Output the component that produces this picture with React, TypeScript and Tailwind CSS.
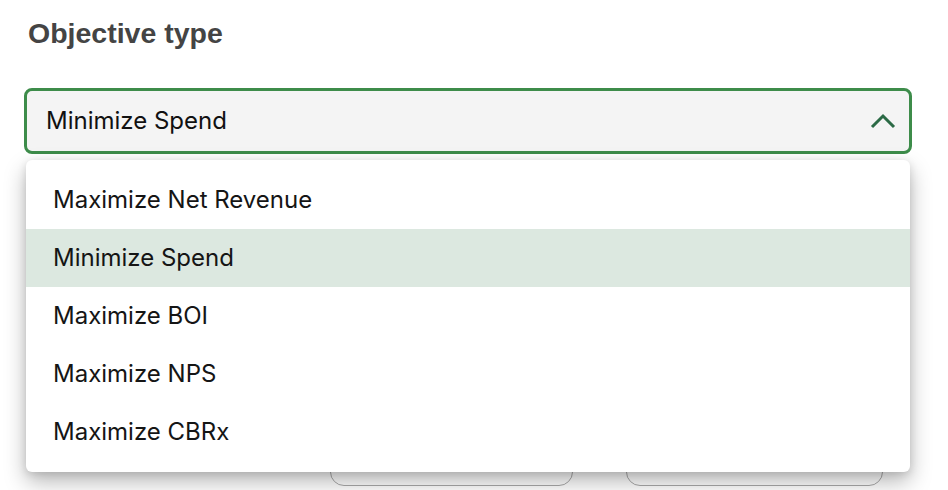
import React from "react";

const items = [
  "Maximize Net Revenue",
  "Minimize Spend",
  "Maximize BOI",
  "Maximize NPS",
  "Maximize CBRx",
];

export default function App() {
  return (
    <div className="relative w-[948px] h-[490px] bg-white overflow-hidden" style={{ fontFamily: "Inter, 'Noto Sans', sans-serif" }}>
      <div className="pl-[28px] pt-[15px]">
        <h2
          className="text-[28.5px] font-bold text-[#444444] leading-[36px]"
          style={{ fontFamily: "'Liberation Sans', Arial, sans-serif" }}
        >
          Objective type
        </h2>
      </div>
      <div className="pl-[24px] pr-[36px] pt-[37px]">
        <div className="h-[66px] rounded-[8px] border-[3px] border-[#3d8c4a] bg-[#f4f4f4] flex items-center justify-between pl-[19px] pr-[12px]">
          <span className="text-[24px] text-[#111111]">Minimize Spend</span>
          <svg width="28" height="20" viewBox="0 0 28 20" fill="none">
            <path d="M3 16 L14 5 L25 16" stroke="#2b6a45" strokeWidth="3" strokeLinecap="butt" strokeLinejoin="miter" />
          </svg>
        </div>
      </div>
      <div className="flex pl-[330px] gap-[53px] pt-[302px]">
        <div className="w-[243px] h-[30px] rounded-b-[14px] border border-[#aaaaaa]" />
        <div className="w-[257px] h-[30px] rounded-b-[14px] border border-[#aaaaaa]" />
      </div>
      <div className="absolute left-[26px] top-[160px] w-[884px] h-[312px] bg-white rounded-[6px] shadow-[0_10px_22px_rgba(0,0,0,0.28),0_2px_8px_rgba(0,0,0,0.12)] pt-[11px]">
        {items.map((it, i) => (
          <div
            key={it}
            className={`h-[58px] flex items-center pl-[27px] text-[24px] text-[#151515] ${i === 1 ? "bg-[#dce8e0]" : ""}`}
          >
            {it}
          </div>
        ))}
      </div>
    </div>
  );
}
